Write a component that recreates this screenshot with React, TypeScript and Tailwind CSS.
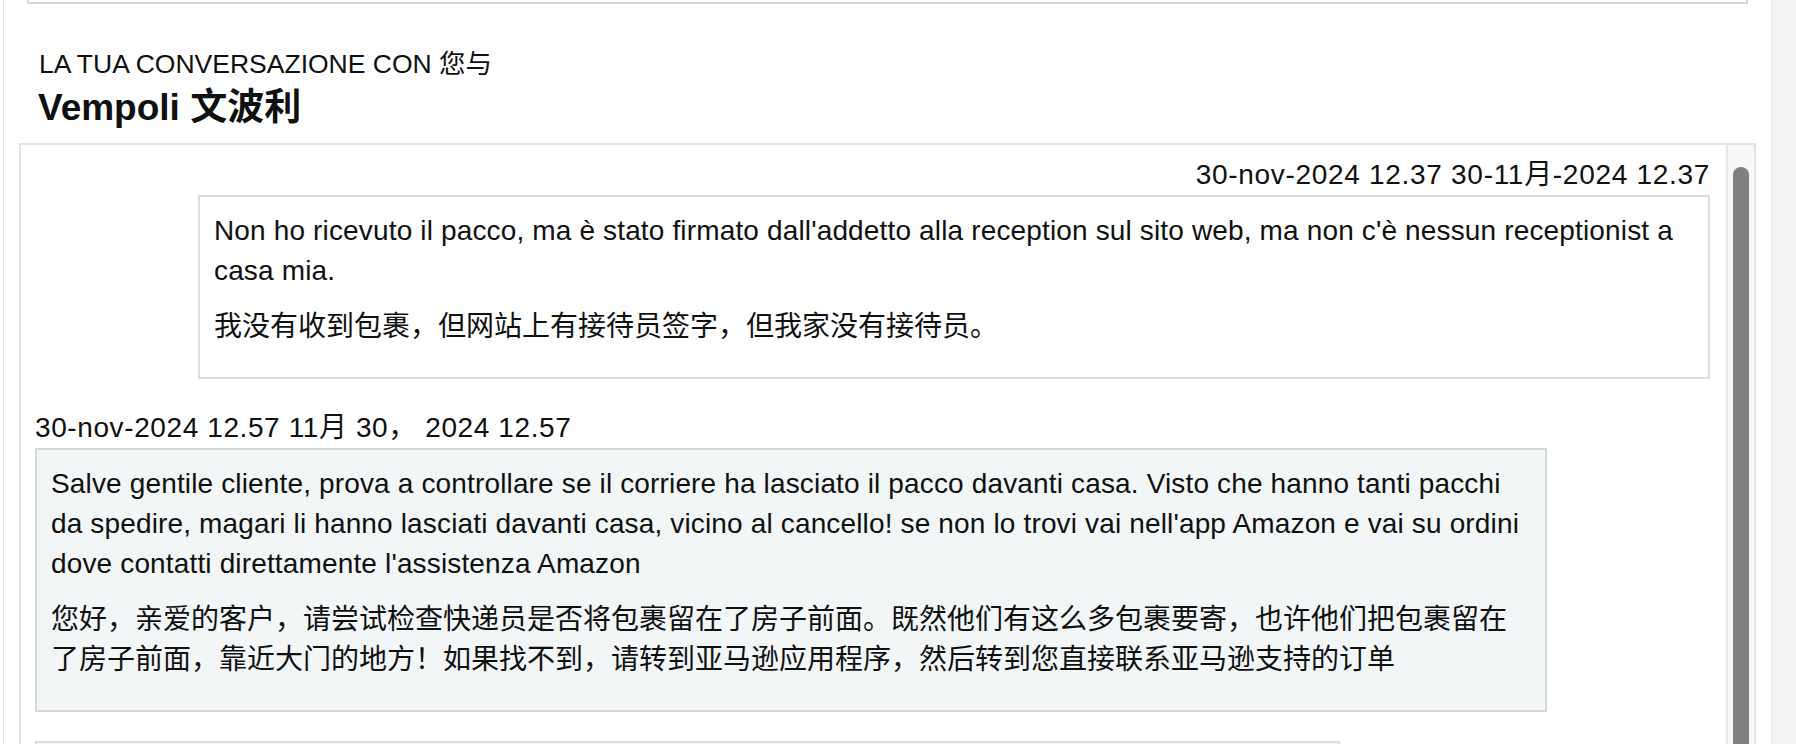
const latin = "whitespace-nowrap tracking-[0.15px]";

function Bubble({ className, children }: { className: string; children: React.ReactNode }) {
  return <div className={`border-2 px-[14px] pt-[14px] pb-[14px] ${className}`}>{children}</div>;
}

export default function App() {
  return (
    <div className="flex h-[744px] w-[1796px] overflow-hidden bg-white font-['Liberation_Sans','Noto_Sans_CJK_SC',sans-serif] text-[#0f1111]">
      <div className="w-[3px] shrink-0" />
      <div className="flex min-w-0 flex-1 flex-col border-x border-[#e6e6e6]">
        {/* bottom edge of the panel above */}
        <div className="ml-[23px] h-[4px] w-[1721px] shrink-0 border-x-2 border-b-2 border-[#d8d8d8]" />

        <div className="ml-[35px] mt-[44px] text-[26.5px] leading-[32px]">LA TUA CONVERSAZIONE CON 您与</div>
        <h2 className="ml-[34px] mt-[6px] text-[37px] font-bold leading-[44px]">Vempoli 文波利</h2>

        <div className="ml-[15px] mt-[13px] flex w-[1737px] flex-1 border-2 border-b-0 border-[#e3e3e3]">
          <div className="min-w-0 flex-1 pl-[14px] pr-[16px] pt-[10px] text-[28px] leading-[40px]">
            <div className="text-right tracking-[0.7px]">30-nov-2024 12.37 30-11月-2024 12.37</div>
            <Bubble className="ml-auto w-[1512px] border-[#dcdcdc] bg-white">
              <p className={`mb-4 ${latin}`}>
                Non ho ricevuto il pacco, ma è stato firmato dall'addetto alla reception sul sito web, ma non c'è nessun receptionist a
                <br />
                casa mia.
              </p>
              <p className="mb-4 whitespace-nowrap">我没有收到包裹，但网站上有接待员签字，但我家没有接待员。</p>
            </Bubble>

            <div className="mt-[29px] tracking-[0.6px]">30-nov-2024 12.57 11月 30， 2024 12.57</div>
            <Bubble className="w-[1512px] border-[#d5d9d9] bg-[#f3f6f6]">
              <p className={`mb-4 ${latin}`}>
                Salve gentile cliente, prova a controllare se il corriere ha lasciato il pacco davanti casa. Visto che hanno tanti pacchi
                <br />
                da spedire, magari li hanno lasciati davanti casa, vicino al cancello! se non lo trovi vai nell'app Amazon e vai su ordini
                <br />
                dove contatti direttamente l'assistenza Amazon
              </p>
              <p className="mb-4 whitespace-nowrap">
                您好，亲爱的客户，请尝试检查快递员是否将包裹留在了房子前面。既然他们有这么多包裹要寄，也许他们把包裹留在
                <br />
                了房子前面，靠近大门的地方！如果找不到，请转到亚马逊应用程序，然后转到您直接联系亚马逊支持的订单
              </p>
            </Bubble>

            <div className="mt-[29px] h-[120px] w-[1305px] border-2 border-[#dcdcdc] bg-[#f7f9f9]" />
          </div>

          {/* scrollbar */}
          <div className="w-[28px] shrink-0 border-l-2 border-[#e6e6e6] bg-[#f8f8f8] pl-[5px] pt-[22px]">
            <div className="h-full w-[16px] rounded-t-full bg-[#808080]" />
          </div>
        </div>
      </div>
      <div className="w-[24px] shrink-0 bg-[#f3f3f3]" />
    </div>
  );
}
